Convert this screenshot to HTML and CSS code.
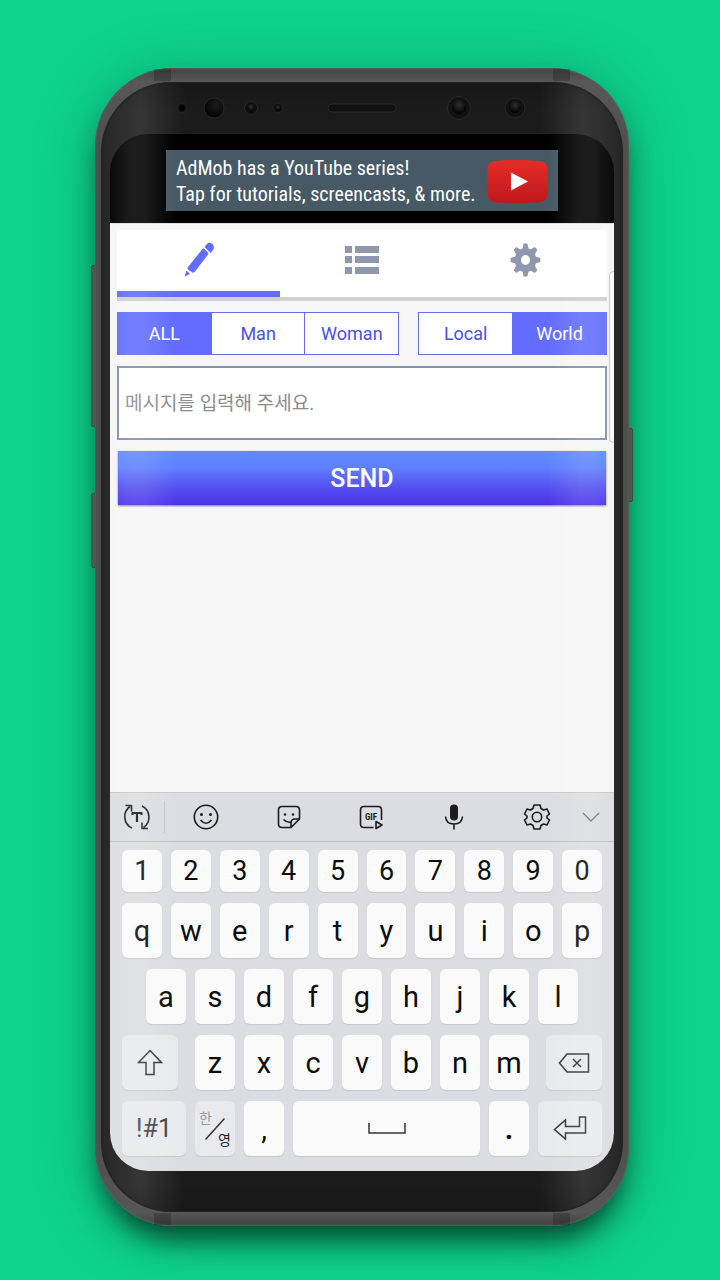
FILE: index.html
```html
<!DOCTYPE html>
<html lang="ko">
<head>
<meta charset="utf-8">
<meta name="viewport" content="width=device-width, initial-scale=1">
<title>Message</title>
<link rel="stylesheet" href="styles.css">
</head>
<body>
<div class="phone">
  <span class="side-button volume"></span>
  <span class="side-button bixby"></span>
  <span class="side-button power"></span>
  <span class="band band-tl"></span><span class="band band-tr"></span>
  <span class="band band-bl"></span><span class="band band-br"></span>
  <div class="bezel">
    <svg class="sensors" viewBox="0 0 504 52" aria-hidden="true">
      <defs>
        <radialGradient id="lens" cx="0.6" cy="0.35" r="0.6"><stop offset="0" stop-color="#1c1c1c"/><stop offset="1" stop-color="#040404"/></radialGradient>
        <radialGradient id="eye" cx="0.5" cy="0.35" r="0.6"><stop offset="0" stop-color="#303030"/><stop offset="1" stop-color="#020202"/></radialGradient>
      </defs>
      <g stroke="#292929" stroke-width="1">
        <circle cx="72" cy="26" r="5" fill="#111"/><circle cx="104" cy="26" r="10" fill="url(#lens)"/>
        <circle cx="141" cy="26" r="6.500" fill="#101010"/><circle cx="168" cy="26" r="5" fill="#101010"/>
        <rect x="218" y="22" width="68" height="8" rx="4" fill="#111"/>
        <circle cx="349" cy="26" r="11.500" fill="#121212"/><circle cx="405" cy="26" r="10" fill="#121212"/>
      </g>
      <circle cx="72" cy="26" r="2.500" fill="#020202"/><circle cx="141" cy="26" r="4" fill="url(#eye)"/><circle cx="168" cy="26" r="3" fill="url(#eye)"/>
      <circle cx="349" cy="25" r="7" fill="url(#eye)"/><circle cx="405" cy="25" r="6" fill="url(#eye)"/>
    </svg>
    <div class="screen">
      <div class="ad-area">
        <a class="ad" href="#">
          <span class="ad-text">AdMob has a YouTube series!<br>Tap for tutorials, screencasts, &amp; more.</span>
          <svg class="ad-logo" viewBox="0 0 61 43" aria-hidden="true">
            <defs><linearGradient id="red" x1="0" y1="0" x2="0" y2="1"><stop offset="0" stop-color="#e52d27"/><stop offset="1" stop-color="#bf171d"/></linearGradient></defs>
            <path d="M9 1Q30-1 52 1Q60 1 60.500 9Q61 22 60.500 34Q60 42 52 42.500Q30 43.500 9 42.500Q1 42 .5 34Q0 22 .5 9Q1 1 9 1Z" fill="url(#red)"/>
            <path d="M24 12.500L41 21.500 24 30.500Z" fill="#fff"/>
          </svg>
        </a>
      </div>
      <main class="app">
        <nav class="tabs">
          <button class="tab active" aria-label="Write">
            <svg width="36" height="38" viewBox="0 0 36 38" fill="#626dff"><path d="M21.500 8Q22.500 7 23.500 8L27 11.500Q28 12.500 27 13.500L14 30.500Q13 32 11.500 31.500L7.500 29Q6 27.500 7 26Z"/><path d="M23.500 6L26 3Q28.500 .5 31.500 3Q34 6 32 9L29.500 12Z"/><path d="M5.500 29.500L9 33 3.500 35.500Z"/></svg>
          </button>
          <button class="tab" aria-label="List">
            <svg width="36" height="38" viewBox="0 0 36 38" fill="#8e97ad"><path d="M1 5h7v7H1zM11 5h24v7H11zM1 15h7v7H1zM11 15h24v7H11zM1 26h7v7H1zM11 26h24v7H11z"/></svg>
          </button>
          <button class="tab" aria-label="Settings">
            <svg width="36" height="38" viewBox="0 0 36 38"><g transform="translate(18.500 19) scale(.9 1)" fill="#8e97ad"><circle r="8.500" fill="none" stroke="#8e97ad" stroke-width="7"/><g id="teeth"><path id="tooth" d="M-3.500-11L-2-16.500H2L3.500-11Z"/><use href="#tooth" transform="rotate(45)"/><use href="#tooth" transform="rotate(90)"/><use href="#tooth" transform="rotate(135)"/></g><use href="#teeth" transform="rotate(180)"/></g></svg>
          </button>
        </nav>
        <div class="filters">
          <div class="segments gender">
            <button class="segment selected">ALL</button><button class="segment">Man</button><button class="segment">Woman</button>
          </div>
          <div class="segments region">
            <button class="segment">Local</button><button class="segment selected">World</button>
          </div>
        </div>
        <input class="message" type="text" aria-label="메시지" placeholder="메시지를 입력해 주세요.">
        <div class="actions"><button class="send">SEND</button></div>
        <span class="edge-handle"></span>
      </main>
      <section class="keyboard" aria-label="Keyboard">
        <div class="toolbar">
          <button class="tool translate" aria-label="Text">
            <svg viewBox="0 0 30 30"><path d="M10 26A12.500 12.500 0 0 1 8 4.500M3.500 3.500H9.500V9.500M20 4A12.500 12.500 0 0 1 21.500 25.500M26 26.500H20V20.500"/><path d="M10.500 13V11H19.500V13M15 11V20" stroke-width="2.200"/></svg>
          </button>
          <button class="tool" aria-label="Emoji">
            <svg viewBox="0 0 30 30"><circle cx="15" cy="15" r="11.700"/><path d="M9.500 18Q15 24.500 20.500 18"/><circle class="solid" cx="10.500" cy="12.500" r="1.500"/><circle class="solid" cx="19.500" cy="12.500" r="1.500"/></svg>
          </button>
          <button class="tool" aria-label="Stickers">
            <svg viewBox="0 0 30 30"><path d="M17 25.500H8Q4.500 25.500 4.500 22V8Q4.500 4.500 8 4.500H22Q25.500 4.500 25.500 8V17L17 25.500V21Q17 17 21 17H25.500M9.500 17.500Q13 21 17 20"/><circle class="solid" cx="11" cy="12.500" r="1.200"/><circle class="solid" cx="19" cy="12.500" r="1.200"/></svg>
          </button>
          <button class="tool" aria-label="GIF">
            <svg viewBox="0 0 30 30"><path d="M17.500 25.500H8Q4.500 25.500 4.500 22V8Q4.500 4.500 8 4.500H22Q25.500 4.500 25.500 8V18M20 19.500L26 23 20 26.500Z"/><text class="gif" x="15" y="18">GIF</text></svg>
          </button>
          <button class="tool" aria-label="Voice">
            <svg viewBox="0 0 30 30"><rect class="solid" x="11" y="2.500" width="8" height="16" rx="4"/><path d="M6.500 14.500Q7 22 15 22Q23 22 23.500 14.500M15 22V27.500"/></svg>
          </button>
          <button class="tool" aria-label="Keyboard settings">
            <svg viewBox="0 0 30 30"><circle cx="15" cy="15" r="4.700"/><path d="M12 3H18L19 6.500 21.500 8 25 7 27.500 12 25 14V16L27.500 18 25 23 21.500 22 19 23.500 18 27H12L11 23.500 8.500 22 5 23 2.500 18 5 16V14L2.500 12 5 7 8.500 8 11 6.500Z"/></svg>
          </button>
          <button class="tool collapse" aria-label="Close">
            <svg viewBox="3 3 24 24"><path d="M7 11L15 19 23 11"/></svg>
          </button>
        </div>
        <div class="keys">
          <div class="row digits"><button class="key">1</button><button class="key">2</button><button class="key">3</button><button class="key">4</button><button class="key">5</button><button class="key">6</button><button class="key">7</button><button class="key">8</button><button class="key">9</button><button class="key">0</button></div>
          <div class="row"><button class="key">q</button><button class="key">w</button><button class="key">e</button><button class="key">r</button><button class="key">t</button><button class="key">y</button><button class="key">u</button><button class="key">i</button><button class="key">o</button><button class="key">p</button></div>
          <div class="row inset"><button class="key">a</button><button class="key">s</button><button class="key">d</button><button class="key">f</button><button class="key">g</button><button class="key">h</button><button class="key">j</button><button class="key">k</button><button class="key">l</button></div>
          <div class="row">
            <button class="key function shift" aria-label="Shift"><svg width="26" height="28" viewBox="0 0 26 28"><path d="M13 1.500L24.500 13.500H17V25.500H9V13.500H1.500Z"/></svg></button>
            <button class="key">z</button><button class="key">x</button><button class="key">c</button><button class="key">v</button><button class="key">b</button><button class="key">n</button><button class="key">m</button>
            <button class="key function backspace" aria-label="Backspace"><svg width="32" height="22" viewBox="0 0 32 22"><path d="M9 2H30.500V20H9L1.500 11ZM15 7L23 15M23 7L15 15"/></svg></button>
          </div>
          <div class="row">
            <button class="key function wide symbols">!#1</button>
            <button class="key function language" aria-label="한/영"><span class="hangul">한</span><svg width="22" height="24" viewBox="0 0 22 24"><path d="M1.500 22.500L20.500 1.500"/></svg><span class="english">영</span></button>
            <button class="key">,</button>
            <button class="key space" aria-label="Space"><svg width="38" height="14" viewBox="0 0 38 14"><path d="M1 1V11H37V1"/></svg></button>
            <button class="key period">.</button>
            <button class="key function wide" aria-label="Enter"><svg width="34" height="26" viewBox="0 0 34 26"><path d="M1.500 13.500L12.500 4V10.500H26.500V1H32.500V17H12.500V23Z"/></svg></button>
          </div>
        </div>
      </section>
    </div>
  </div>
</div>
</body>
</html>
```
FILE: styles.css
```css
* { box-sizing: border-box; }
body {
  margin: 0;
  min-height: 100vh;
  padding: 68px 91px 54px 95px;
  background: #0ed38f;
  font-family: Roboto, "Noto Sans CJK KR", sans-serif;
}
button { margin: 0; padding: 0; border: 0; background: none; font-family: inherit; color: inherit; }
svg { display: block; }

/* Phone body */
.phone {
  position: relative;
  padding: 14px 6px;
  border-radius: 78px;
  background: linear-gradient(#434343, #585858 14px, #4e4e4e 80px, #4e4e4e calc(100% - 80px), #575757 calc(100% - 14px), #414141);
  box-shadow: inset 0 0 2px 1px #5c5c5c, 0 20px 28px -8px rgba(0, 40, 25, .8), 0 8px 60px rgba(0, 70, 40, .35);
}
.bezel {
  padding: 0 9px 41px;
  border-radius: 70px;
  background:
    linear-gradient(rgba(0, 0, 0, .15), transparent 30px, transparent calc(100% - 30px), rgba(0, 0, 0, .15)),
    linear-gradient(90deg, #262626, #363636 40px, #1b1b1b 84px, #1b1b1b calc(100% - 84px), #363636 calc(100% - 40px), #262626);
  box-shadow: inset 0 0 2px 1px #222;
}
.side-button { position: absolute; z-index: -1; width: 6px; border-radius: 2px; background: #707070; border: 1px solid #585858; }
.volume { left: -4px; top: 197px; height: 162px; }
.bixby { left: -4px; top: 425px; height: 75px; }
.power { right: -4px; top: 360px; height: 74px; }
.band { position: absolute; width: 17px; height: 12px; background: rgba(0, 0, 0, .2); }
.band-tl, .band-tr { top: 1px; }
.band-bl, .band-br { bottom: 1px; }
.band-tl, .band-bl { left: 59px; }
.band-tr, .band-br { right: 59px; }
.sensors { width: 100%; }

/* Screen */
.screen { position: relative; overflow: hidden; border-radius: 38px; background: #000; }
.screen::after {
  content: "";
  position: absolute;
  inset: 0;
  pointer-events: none;
  background: linear-gradient(90deg, rgba(255, 255, 255, .04), rgba(255, 255, 255, .11) 20px, rgba(255, 255, 255, .11) 34px, transparent 66px, transparent calc(100% - 66px), rgba(255, 255, 255, .11) calc(100% - 34px), rgba(255, 255, 255, .11) calc(100% - 20px), rgba(255, 255, 255, .04));
}
.ad-area { padding: 16px 56px 12px; }
.ad { display: flex; align-items: center; justify-content: space-between; padding: 5px 10px 4px; background: #465965; color: #fff; text-decoration: none; }
.ad-text { font-family: "Roboto Condensed", Roboto, sans-serif; font-size: 20px; line-height: 26px; white-space: nowrap; }
.ad-logo { width: 61px; flex: none; }

/* Application */
.app { position: relative; min-height: 569px; padding: 6px 7px; background: #f6f6f6; border-top: 1px solid #ddd; }
.tabs { display: flex; background: #fff; border-bottom: 4px solid #d0d0d0; }
.tab { display: flex; flex: 1; justify-content: center; padding: 11px 0 12px; border-bottom: 6px solid transparent; }
.tab.active { border-color: #626dff; }
.filters { display: flex; gap: 19px; margin-top: 11px; }
.segments { display: flex; border: 1px solid #646df0; background: #fff; }
.gender { flex: 3; }
.region { flex: 2; }
.segment { flex: 1 1 0; height: 41px; font-size: 18px; color: #4a50e6; }
.segment + .segment { border-left: 1px solid #646df0; }
.segment.selected { background: #626dff; color: #fff; }
.message { display: block; width: 100%; height: 74px; margin-top: 11px; padding: 0 6px; border: 2px solid #8590a8; border-radius: 0; background: #fff; font-family: inherit; font-size: 19px; outline: 0; }
.message::placeholder { color: #8c8c8c; opacity: 1; }
.actions { padding: 11px 1px 0; }
.send { display: block; width: 100%; height: 54px; background: linear-gradient(#5e8dff, #5f80ff 30%, #5550ef 68%, #4b32ec); box-shadow: 0 1px 2px rgba(0, 0, 0, .5); color: #fff; font-size: 25px; font-weight: 500; }
.edge-handle { position: absolute; top: 47px; right: -4px; width: 9px; height: 172px; border: 1px solid #c4c4c4; border-radius: 6px; background: #f8f8f8; }

/* Keyboard */
.keyboard { background: #dcdde2; }
.toolbar { display: flex; align-items: center; height: 50px; border-top: 1px solid #c8c9cc; border-bottom: 1px solid #bfc0c4; }
.tool { display: flex; flex: 1 1 0; justify-content: center; }
.tool svg { width: 30px; height: 30px; fill: none; stroke: #1c1c1c; stroke-width: 1.6; stroke-linejoin: round; }
.tool .solid { fill: #1c1c1c; stroke: none; }
.tool .gif { fill: #1c1c1c; stroke: none; font-family: "Roboto Condensed", Roboto, sans-serif; font-size: 9px; font-weight: 700; text-anchor: middle; }
.tool.translate { flex: 0 0 55px; height: 32px; align-items: center; border-right: 1px solid #c6c7ca; }
.tool.collapse { flex: 0 0 36px; padding-right: 10px; }
.tool.collapse svg { width: 24px; height: 24px; stroke: #707070; stroke-width: 1.2; }
.keys { display: flex; flex-direction: column; gap: 11px; padding: 8px 12px 15px; }
.row { display: flex; gap: 9px; }
.inset { padding: 0 24px; }
.key { display: flex; flex: 40 1 0; min-width: 0; height: 55px; align-items: center; justify-content: center; border-radius: 6px; background: #fafafa; box-shadow: 0 1px 1px rgba(0, 0, 0, .1); color: #0c0c0c; font-size: 29px; }
.digits .key { height: 42px; font-size: 27px; }
.key svg { fill: none; stroke: #333; stroke-width: 1.5; }
.key.function { background: #e9eaee; }
.key.shift { flex-grow: 56; margin-right: 8px; }
.key.backspace { flex-grow: 56; margin-left: 8px; }
.key.wide { flex-grow: 64; }
.key.space { flex-grow: 187; }
.key.period { font-weight: 700; }
.key.symbols { font-size: 25px; color: #444; }
.key.language { position: relative; font-family: "Noto Sans CJK KR", sans-serif; font-size: 14px; line-height: 16px; }
.hangul, .english { position: absolute; }
.hangul { top: 8px; left: 4px; color: #999; }
.english { right: 4px; bottom: 9px; color: #222; }
```
